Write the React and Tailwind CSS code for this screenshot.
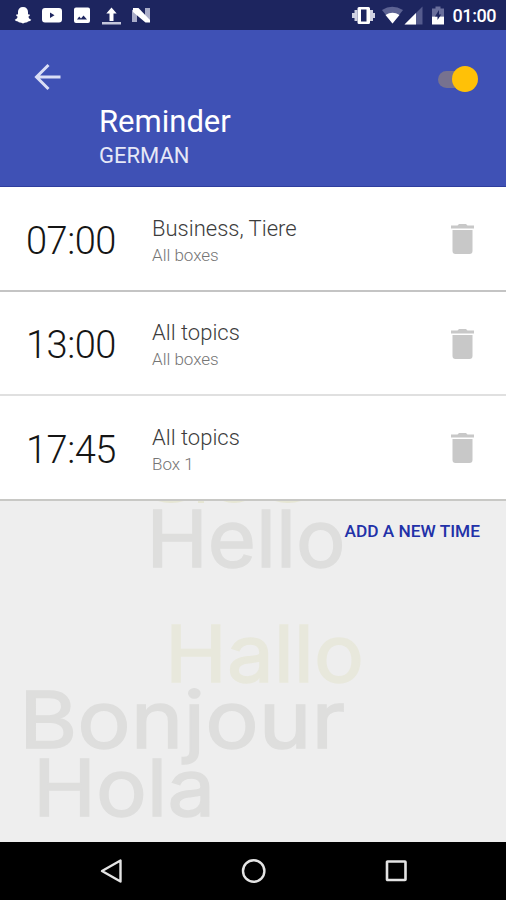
import React from "react";

const reminders = [
  { time: "07:00", topic: "Business, Tiere", box: "All boxes", border: "border-[#c4c4c4]" },
  { time: "13:00", topic: "All topics", box: "All boxes", border: "border-[#e0e0e0]" },
  { time: "17:45", topic: "All topics", box: "Box 1", border: "border-[#c8c8c5]" },
];

function StatusBar() {
  return (
    <div className="flex h-[30px] shrink-0 items-center bg-[#1d255f] text-white">
      <svg width="506" height="30" viewBox="0 0 506 30" fill="#fff">
        {/* ghost */}
        <path d="M23 7c-3.2 0-5 2-5 5v2.2l-2 .6c.2 1.3 1 1.6 1.700 2-.6 1.600-1.500 2.400-3 3 .7 1.500 1.800 1.500 3.300 1.700.8 1.300 2.600.8 5 2 2.400-1.200 4.200-.7 5-2 1.500-.2 2.600-.2 3.300-1.700-1.500-.6-2.400-1.400-3-3 .7-.4 1.500-.7 1.700-2l-2-.6V12c0-3-1.800-5-5-5z" />
        {/* video */}
        <path fillRule="evenodd" d="M45 8h14q3 0 3 3v8.500q0 3-3 3H45q-3 0-3-3V11q0-3 3-3zM50 12.500v5.500l4.500-2.700z" />
        {/* picture */}
        <path fillRule="evenodd" d="M76 7.500h12q2 0 2 2v11.500q0 2-2 2H76q-2 0-2-2V9.500q0-2 2-2zM77 19.500h10l-3.500-4-2.500 3-1.800-2z" />
        {/* upload */}
        <path d="M111.500 7.500l5.200 6h-3.200V21h-4v-7.500h-3.200z" />
        <path d="M102 22h19v2.500h-19z" fill="#c5c7dc" />
        {/* N */}
        <path d="M132 10l5-1v13h-5zM145 8h5v13l-5 1z" fill="#a9acc8" />
        <path d="M133 8h5.500l11.500 12v2.500h-4.500L133 12z" />
        {/* vibrate */}
        <path fillRule="evenodd" d="M359 7h9.500q1.500 0 1.500 1.500v14q0 1.500-1.500 1.500H359q-1.500 0-1.500-1.500v-14Q357.500 7 359 7zM361 9.500v12h5.500v-12z" />
        <path d="M354.500 10v11h3V10zM352 13v5h2.500v-5zM370 10v11h3V10zM373 13v5h2v-5z" fill="#d0d2e2" />
        {/* wifi */}
        <path d="M382 10q10-6.500 21 0L392.500 23.500z" fill="#5d6393" />
        <path d="M385.500 15q7-4.500 14 0l-7 8.500z" />
        {/* signal */}
        <path d="M422.500 6.500v18h-18z" fill="#555b8d" />
        <path d="M416 13v11.500h-11.500z" />
        {/* battery */}
        <path d="M435.500 6.500h5V8.500h3.500v8h-12v-8h3.500z" fill="#6a6f9c" />
        <path d="M432 16.500h12v8h-12z" />
        <path d="M439 10l-4 6.500h2.500v3.500l3.700-5.500h-2.200z" fill="#1d255f" />
        <text x="452.500" y="22" fontSize="18" fontWeight="500" fontFamily="Roboto, sans-serif" textLength="44">01:00</text>
      </svg>
    </div>
  );
}

function Header() {
  return (
    <header className="h-[157px] shrink-0 border-b border-[#2f3e9e] bg-[#3f51b5] text-white">
      <div className="flex h-[72px] items-start justify-between pl-[33px] pr-[28px] pt-[33px]">
        <svg width="28" height="28" viewBox="0 0 28 28" fill="none" stroke="#dadef6" strokeWidth="3">
          <path d="M27.500 14H3M15.500 2L3.500 14l12 12" />
        </svg>
        <div className="mt-[3px] flex h-[26px] w-[40px] items-center justify-end rounded-full">
          <div className="h-[17px] w-[24px] rounded-l-full bg-[#77728f]" />
          <div className="-ml-[10px] size-[26px] rounded-full bg-[#ffc107]" />
        </div>
      </div>
      <h1 className="pl-[99px] text-[31px] leading-[39px]">Reminder</h1>
      <p className="pl-[99px] text-[22px] leading-[30px] text-[#e6e8f7]">GERMAN</p>
    </header>
  );
}

function ReminderRow({ time, topic, box, border }) {
  return (
    <li className={`flex h-[104.5px] items-center border-b-2 bg-white pl-[26px] pr-[32px] ${border}`}>
      <span className="w-[126px] pt-[5px] text-[38px] font-light leading-none tracking-[-0.5px] text-[#151515]">{time}</span>
      <div className="flex-1 pt-[5px] font-light">
        <div className="text-[22px] leading-[28px] text-[#3c3c3c]">{topic}</div>
        <div className="text-[17px] leading-[24px] text-[#757575]">{box}</div>
      </div>
      <svg className="mt-[2px]" width="23" height="32" viewBox="0 0 23 32" fill="#c8c8c8">
        <path d="M0 2.500h6.500L8 1h7l1.500 1.500H23v3H0zM1.500 7h20v21q0 3-3 3h-14q-3 0-3-3z" />
      </svg>
    </li>
  );
}

function Greetings() {
  return (
    <svg
      className="absolute inset-0"
      width="506"
      height="341"
      viewBox="0 501 506 341"
      fill="#dededd"
      stroke="#dededd"
      strokeWidth="1.500"
      fontFamily="Inter, sans-serif"
      fontSize="79"
    >
      {/* lower edge of a greeting that the list covers */}
      <path d="M158 501h26q-13 4-26 0zM198 501h6v2h-6zM223 501h22q-11 4-22 0zM275 501h26q-13 4-26 0z" fill="#e6e6d4" stroke="none" />
      <text x="146.500" y="567" textLength="199" lengthAdjust="spacingAndGlyphs">Hello</text>
      <text x="165" y="682" fill="#e8e8dc" stroke="#e8e8dc" textLength="199" lengthAdjust="spacingAndGlyphs">Hallo</text>
      <text x="19" y="748" textLength="326" lengthAdjust="spacingAndGlyphs">Bonjour</text>
      <text x="33" y="816" textLength="182" lengthAdjust="spacingAndGlyphs">Hola</text>
    </svg>
  );
}

function NavBar() {
  return (
    <nav className="flex h-[58px] shrink-0 items-center justify-between bg-black pl-[99px] pr-[98px]">
      <svg width="24" height="26" viewBox="0 0 24 26" fill="none" stroke="#e4e4e4" strokeWidth="2.400">
        <path d="M21.500 2.500v21L3 13z" strokeLinejoin="round" />
      </svg>
      <svg width="26" height="26" viewBox="0 0 26 26" fill="none" stroke="#e4e4e4" strokeWidth="2.400">
        <circle cx="12.700" cy="13" r="10.700" />
      </svg>
      <svg width="24" height="26" viewBox="0 0 24 26" fill="none" stroke="#e4e4e4" strokeWidth="2.600">
        <rect x="3" y="3.500" width="18.500" height="18.500" rx=".5" />
      </svg>
    </nav>
  );
}

export default function App() {
  return (
    <div className="flex h-[900px] w-[506px] flex-col overflow-hidden bg-[#eee] font-[Roboto,sans-serif]">
      <StatusBar />
      <Header />
      <ul className="shrink-0">
        {reminders.map((r) => (
          <ReminderRow key={r.time} {...r} />
        ))}
      </ul>
      <main className="relative flex-1">
        <Greetings />
        <div className="relative flex justify-end pr-[26px] pt-[18px]">
          <button className="text-[17.300px] font-medium leading-[24px] text-[#2231a8]">ADD A NEW TIME</button>
        </div>
      </main>
      <NavBar />
    </div>
  );
}
